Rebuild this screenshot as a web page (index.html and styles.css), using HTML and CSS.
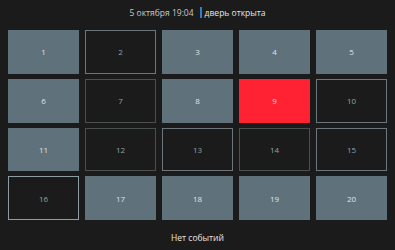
FILE: index.html
```html
<!DOCTYPE html>
<html lang="ru">
<head>
<meta charset="utf-8">
<link rel="stylesheet" href="styles.css">
</head>
<body>
<div class="header"><span class="date">5 октября 19:04</span><span class="status">дверь открыта</span></div>
<div class="grid">
  <div class="cell fill">1</div>
  <div class="cell out">2</div>
  <div class="cell fill">3</div>
  <div class="cell fill">4</div>
  <div class="cell fill">5</div>
  <div class="cell fill">6</div>
  <div class="cell out dim">7</div>
  <div class="cell fill">8</div>
  <div class="cell red">9</div>
  <div class="cell out">10</div>
  <div class="cell fill">11</div>
  <div class="cell out dim">12</div>
  <div class="cell out">13</div>
  <div class="cell out dim">14</div>
  <div class="cell out">15</div>
  <div class="cell out light">16</div>
  <div class="cell fill">17</div>
  <div class="cell fill">18</div>
  <div class="cell fill">19</div>
  <div class="cell fill">20</div>
</div>
<div class="footer">Нет событий</div>
</body>
</html>
```
FILE: styles.css
```css
html, body {
  margin: 0;
  background: #1b1b1b;
}
body {
  padding: 0 8px;
  font-family: "Open Sans", "DejaVu Sans", sans-serif;
}
.header {
  height: 26px;
  line-height: 26px;
  margin-bottom: 4px;
  text-align: center;
  font-size: 8.5px;
  color: #c9c9c9;
}
.status {
  margin-left: 6px;
  padding-left: 3px;
  border-left: 2px solid #2f7ed6;
  color: #e6e6e6;
}
.grid {
  display: grid;
  grid-template-columns: repeat(5, 1fr);
  grid-template-rows: repeat(4, 1fr);
  gap: 5px 6px;
  height: 190px;
}
.cell {
  display: flex;
  align-items: center;
  justify-content: center;
  font-size: 8px;
  box-sizing: border-box;
}
.fill {
  background: #5f717a;
  color: #dfe6ea;
}
.out {
  border: 1px solid #6c767b;
  color: #8fa3ad;
  background: #1b1b1b;
}
.out.dim {
  border-color: #4a4f52;
}
.out.light {
  border-color: #8c9ca2;
}
.red {
  background: #ff2233;
  color: #ffd9dc;
}
.footer {
  margin-top: 8px;
  line-height: 20px;
  text-align: center;
  font-size: 8.5px;
  color: #ebe4e4;
}
```
